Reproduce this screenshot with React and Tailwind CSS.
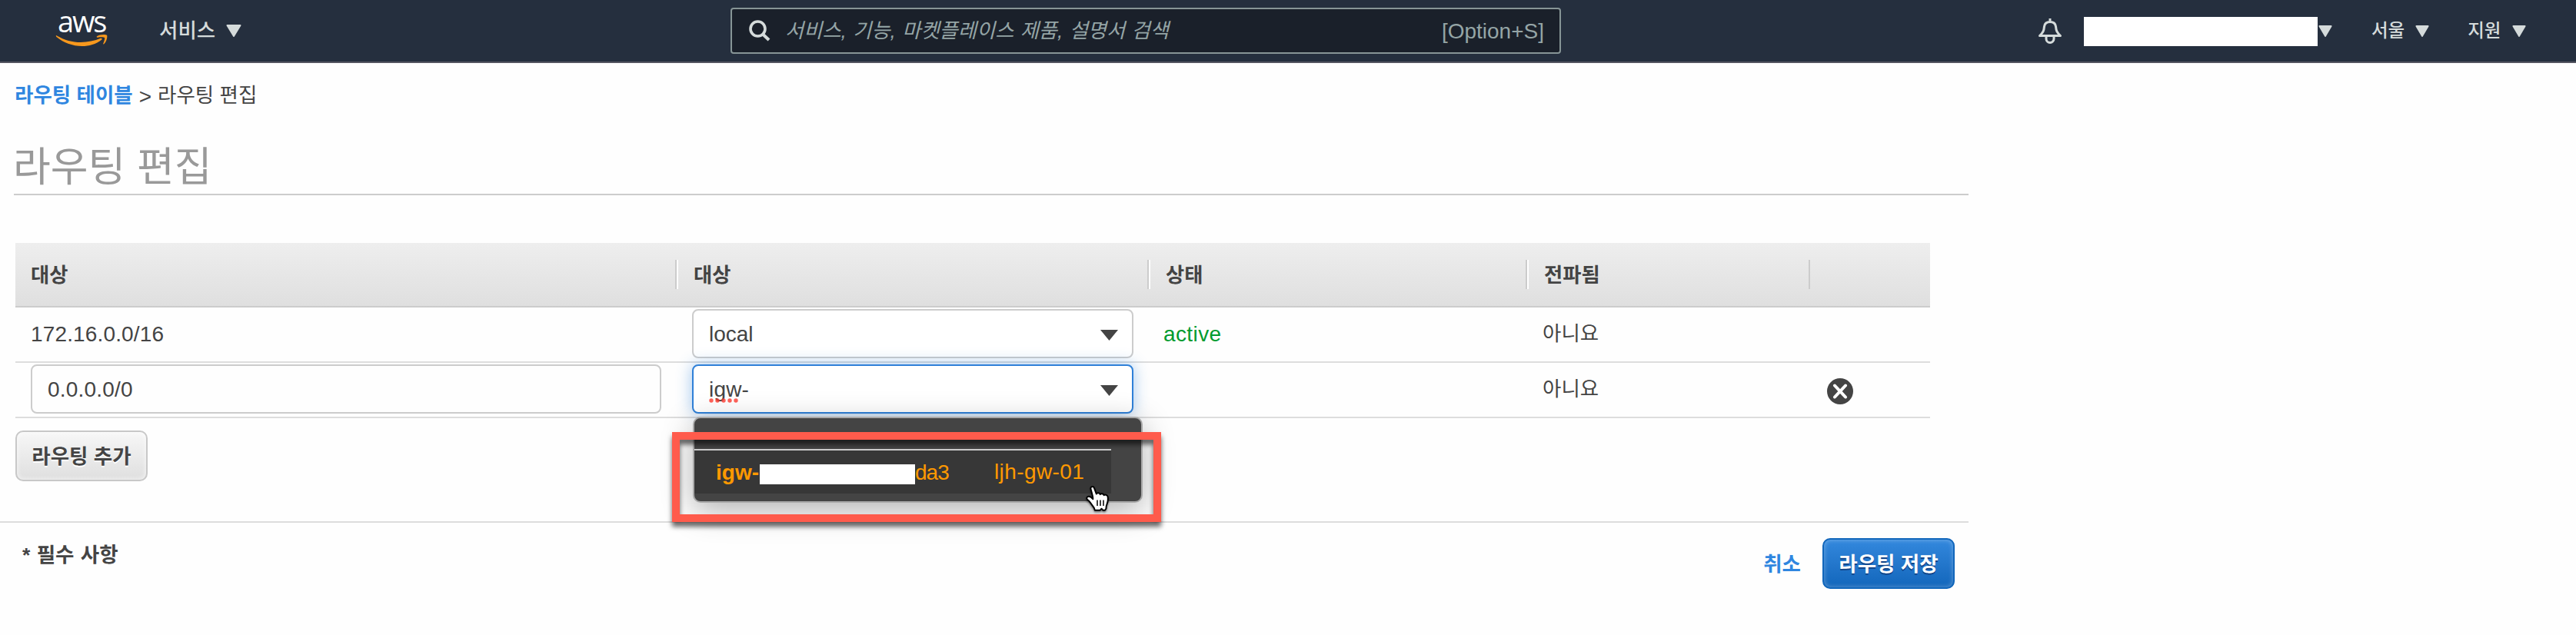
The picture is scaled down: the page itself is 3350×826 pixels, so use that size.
import React from 'react';

const routes = [
  { destination: '172.16.0.0/16', target: 'local', status: 'active', propagated: '아니요', editable: false },
  { destination: '0.0.0.0/0', target: 'igw-', status: '', propagated: '아니요', editable: true },
];

const headers = ['대상', '대상', '상태', '전파됨', ''];

const Caret = ({ className }) => (
  <svg viewBox="0 0 20 16" preserveAspectRatio="none" className={className}>
    <path d="M1.5 1h17L10 15z" fill="currentColor" stroke="currentColor" strokeWidth="2" strokeLinejoin="round" />
  </svg>
);

const SelectCaret = () => (
  <svg viewBox="0 0 23 14" className="w-[23px] h-[14px] text-[#444]">
    <path d="M0 0h23L11.5 14z" fill="currentColor" />
  </svg>
);

const AwsLogo = () => (
  <div className="w-[70px] h-[80px] ml-[72px] pt-[10px] shrink-0">
    <div className="h-[34px] pl-[3px] font-['Open_Sans'] font-medium text-[38px] leading-[34px] tracking-[-2.2px] text-white">aws</div>
    <svg viewBox="0 0 70 17" className="block w-[70px] h-[17px] text-[#f7981d]">
      <path d="M1.500 2.200C12 8.200 22 11 33 11c9 0 18-1.900 26-5.200 1.300-.600 2.400.900 1.100 1.900C53 13.500 43.500 16 35 16 22 16 10.200 11.200 1.400 4 .5 3.200 .6 1.700 1.500 2.200z" fill="currentColor" />
      <path d="M54 3.200C57.500.4 66 .5 67 1.800c1.100 1.400-.4 8.600-3.800 11.400-.7.600-1.300.200-1-.5 1-2.200 2.600-6.600 1.800-7.600-.8-1-6-.8-8.900-.4-1 .1-1.900-.7-1.100-1.500z" fill="currentColor" />
    </svg>
  </div>
);

const NavBar = () => (
  <header className="flex items-center w-full h-[82px] bg-[#252f3e] border-b-2 border-[#545560] text-[#d5dbdb]">
    <AwsLogo />
    <div className="flex items-center w-[107px] ml-[65px]">
      <span className="text-[26.500px] leading-[40px] font-medium">서비스</span>
      <Caret className="w-[20px] h-[16px] ml-auto" />
    </div>
    <div className="flex items-center w-[1080px] h-[60px] ml-[636px] pl-[22px] pr-5 border-2 border-[#879596] rounded-[4px] bg-[#1a202a]">
      <svg viewBox="0 0 28 28" className="w-[28px] h-[28px]" fill="none" stroke="currentColor">
        <circle cx="11.500" cy="11.500" r="9.500" strokeWidth="3.600" />
        <path d="M18 18.500l8 7.500" strokeWidth="4" />
      </svg>
      <span className="ml-[19px] text-[26.300px] leading-[40px] italic text-[#95a5a6] [word-spacing:1px]">서비스, 기능, 마켓플레이스 제품, 설명서 검색</span>
      <span className="ml-auto pt-[2px] text-[28px] leading-[40px] text-[#95a5a6]">[Option+S]</span>
    </div>
    <svg viewBox="0 0 32 33" className="w-[32px] h-[33px] ml-[620px]" fill="none" stroke="currentColor">
      <path d="M16 0v4" strokeWidth="3" />
      <path d="M2.500 22.500c5-4.500 5.500-7 6-12C9 6.500 12 4.500 16 4.500s7 2 7.500 6c.5 5 1 7.500 6 12z" strokeWidth="3" strokeLinejoin="round" />
      <path d="M11 23v3.500a5 5 0 0 0 10 0V23" strokeWidth="3" />
    </svg>
    <div className="w-[304px] h-[38px] ml-[28px] mt-[2px] bg-white" />
    <Caret className="w-[18px] h-[15px] ml-px" />
    <span className="ml-[51px] text-[23.500px] leading-[40px] font-medium">서울</span>
    <Caret className="w-[18px] h-[15px] ml-[14px]" />
    <span className="ml-[50px] text-[23.500px] leading-[40px] font-medium">지원</span>
    <Caret className="w-[18px] h-[15px] ml-[14px]" />
  </header>
);

const TargetSelect = ({ value, active }) => (
  <div
    className={
      active
        ? 'flex items-center w-[574px] h-[64px] pl-5 pr-[18px] border-2 border-[#2f80d8] rounded-[8px] bg-white shadow-[0_0_20px_rgba(47,128,216,0.45)]'
        : 'flex items-center w-[574px] h-[64px] pl-5 pr-[18px] border-2 border-[#ccc] rounded-[8px] bg-white'
    }
  >
    {active ? (
      <span className="relative pt-px text-[28px] leading-[32px] tracking-[0.2px]">
        {value}
        <svg viewBox="0 0 40 6" className="absolute left-0 top-[28px] w-[40px] h-[6px]">
          {[3, 11, 19, 27, 35].map((x) => (
            <circle key={x} cx={x} cy="3" r="2.700" fill="#ff3b30" fillOpacity="0.8" />
          ))}
        </svg>
      </span>
    ) : (
      <span className="pt-px text-[28px] leading-[32px]">{value}</span>
    )}
    <span className="ml-auto pt-[4px]">
      <SelectCaret />
    </span>
  </div>
);

const TargetMenu = () => (
  <div className="absolute left-0 top-[68px] z-10 w-[585px] h-[112px] pt-[40px] border-2 border-[#a9a9a9] rounded-[10px] bg-[#444] shadow-[0_10px_40px_rgba(0,0,0,0.3)]">
    <div className="flex items-center w-[542px] h-[58px] pl-[28px] border-t-2 border-[#ccc] bg-[#373737] text-[28px] leading-[32px] text-[#ff9900]">
      <span className="w-[57px] font-bold pt-px">igw-</span>
      <span className="w-[202px] h-[26px] mt-[5px] bg-white" />
      <span className="w-[43px] pt-px tracking-[-1px]">da3</span>
      <span className="ml-[60px] -mt-px tracking-[0.4px]">ljh-gw-01</span>
    </div>
  </div>
);

const HandCursor = () => (
  <svg viewBox="0 0 32 36" className="absolute left-[511px] top-[157px] z-30 w-[32px] h-[36px] drop-shadow-[0_2px_1px_rgba(0,0,0,0.4)]">
    <path
      d="M6.500 5.200C5.600 1.800 9.900.9 11 3.800L13.800 11.500c.8-1.800 4.300-1.600 5 .6.900-1.600 4.200-1.100 4.900 1 1.100-1.300 4.400-.4 4.900 1.900.6 3.300.3 6.500-1.100 9.800-.7 1.700-1.100 3.200-1 5.700l-1.500 2.200h-2.800l-1.700-2-1.700 2h-7c-.4-2.800-1.700-4.500-3.600-6.700-1.600-1.900-3.100-5-5.600-6.700-2.200-1.500-1.400-4.300 1-4.500 2.100-.2 4.200 1.600 5.700 3.400.3-3.300-1.600-8.500-2.800-13z"
      fill="#fff"
      stroke="#000"
      strokeWidth="2"
      strokeLinejoin="round"
    />
    <path d="M15 19.500v7.500M19 19.500v7.500M23 19.500v7.500" stroke="#000" strokeWidth="1.500" />
  </svg>
);

const RemoveIcon = () => (
  <svg viewBox="0 0 36 36" className="w-[36px] h-[36px]">
    <circle cx="18" cy="18" r="17" fill="#444" />
    <path d="M11 10.500l14 15M25 10.500l-14 15" stroke="#fff" strokeWidth="4" strokeLinecap="round" />
  </svg>
);

const RouteTable = () => (
  <div className="w-[2490px]">
    <div className="grid grid-cols-[862px_614px_492px_366px_156px] items-center h-[84px] border-b-2 border-[#ccc] bg-linear-to-b from-[#eee] to-[#dfdfdf]">
      {headers.map((title, i) => (
        <div key={i} className="flex items-center h-[38px] pl-5">
          <span className="pt-[2px] text-[26.300px] leading-[38px] font-bold">{title}</span>
          {i < 3 && <span className="w-[4px] h-[38px] ml-auto border-l-2 border-[#ccc] bg-white" />}
          {i === 3 && <span className="w-[2px] h-[38px] ml-auto bg-[#ccc]" />}
        </div>
      ))}
    </div>
    {routes.map((route) => (
      <div
        key={route.destination}
        className="grid grid-cols-[862px_614px_492px_366px_156px] h-[72px] pt-[2px] border-b-2 border-[#ddd]"
      >
        <div className="pl-5">
          {route.editable ? (
            <div className="flex items-center w-[820px] h-[64px] pl-5 pt-px border-2 border-[#ccc] rounded-[8px] text-[28px] leading-[32px] tracking-[0.2px]">
              {route.destination}
            </div>
          ) : (
            <div className="flex items-center h-[64px] pt-px text-[28px] leading-[32px] tracking-[0.15px]">{route.destination}</div>
          )}
        </div>
        <div className="relative pl-[18px]">
          <TargetSelect value={route.target} active={route.editable} />
          {route.editable && (
            <div className="absolute left-[19px] top-0">
              <TargetMenu />
              {/* highlighted option */}
              <div className="absolute left-[-27px] top-[88px] z-20 w-[636px] h-[117px] border-[10px] border-[#ff5b4c] drop-shadow-[0_6px_3px_rgba(0,0,0,0.6)]" />
              <HandCursor />
            </div>
          )}
        </div>
        <div className="flex items-center h-[64px] pl-[17px] pt-px text-[28px] leading-[32px] tracking-[0.4px] text-[#009b2e]">{route.status}</div>
        <div className="flex items-center h-[64px] pl-[18px] text-[26.500px] leading-[32px]">{route.propagated}</div>
        <div className="flex items-center h-[64px] pl-[21px] pt-[6px]">{route.editable && <RemoveIcon />}</div>
      </div>
    ))}
  </div>
);

const App = () => {
  return (
    <div className="w-[3350px] h-[826px] overflow-hidden bg-[#fefefe] font-['Liberation_Sans','Noto_Sans_CJK_KR',sans-serif] text-[#444]">
      <NavBar />
      <main className="w-[2560px]">
        <nav className="flex items-center h-[40px] mt-[22px] pl-[19px] text-[26.500px] leading-[40px]">
          <a className="font-bold text-[#2f86e0]">라우팅 테이블</a>
          <span className="ml-[8px] pt-[4px] text-[28px]">&gt;</span>
          <span className="ml-[8px]">라우팅 편집</span>
        </nav>
        <h1 className="h-[110px] ml-[18px] pt-[39px] border-b-2 border-[#ccc] text-[53px] leading-[70px] indent-[-1px] text-[#999]">라우팅 편집</h1>
        <div className="pt-[62px] pl-5">
          <RouteTable />
          <button className="flex items-center justify-center w-[172px] h-[66px] mt-[16px] border-2 border-[#c8c8c8] rounded-[10px] bg-linear-to-b from-[#f7f7f7] to-[#dfdfdf] shadow-[inset_0_0_6px_rgba(255,255,255,0.8)] pt-[2px] text-[26.500px] leading-[40px] font-bold [text-shadow:0_2px_0_#fff]">
            라우팅 추가
          </button>
        </div>
        <footer className="flex h-[140px] mt-[52px] pl-[29px] border-t-2 border-[#ddd] text-[26.500px] leading-[40px] font-bold">
          <span className="pt-[22px] [word-spacing:1px]">* 필수 사항</span>
          <a className="ml-auto pt-[34px] text-[#2f86e0]">취소</a>
          <button className="flex items-center justify-center w-[172px] h-[66px] ml-[28px] mr-[18px] mt-[20px] border-2 border-[#1166bb] rounded-[10px] bg-linear-to-b from-[#3388dd] to-[#1166bb] shadow-[inset_0_0_6px_rgba(255,255,255,0.35)] pt-[2px] text-white [text-shadow:0_2px_0_#114488]">
            라우팅 저장
          </button>
        </footer>
      </main>
    </div>
  );
};

export default App;
